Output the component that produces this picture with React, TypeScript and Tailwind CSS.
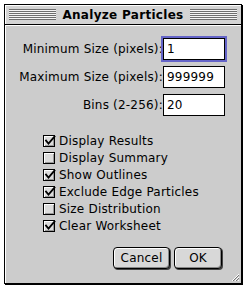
import type { ReactNode } from 'react';

const fields = [
  { label: 'Minimum Size (pixels):', value: '1', focused: true },
  { label: 'Maximum Size (pixels):', value: '999999', focused: false },
  { label: 'Bins (2-256):', value: '20', focused: false },
];

const options = [
  { label: 'Display Results', checked: true },
  { label: 'Display Summary', checked: false },
  { label: 'Show Outlines', checked: true },
  { label: 'Exclude Edge Particles', checked: true },
  { label: 'Size Distribution', checked: false },
  { label: 'Clear Worksheet', checked: true },
];

function Stripes({ className }: { className: string }) {
  return (
    <div
      className={`h-[11px] bg-[repeating-linear-gradient(to_bottom,#6e6e6e_0px,#6e6e6e_1px,#f4f4f4_1px,#f4f4f4_2px)] ${className}`}
    />
  );
}

function CheckBox({ checked }: { checked: boolean }) {
  return (
    <span className="relative block h-[12px] w-[12px] shrink-0 border border-black bg-[#dcdcdc] shadow-[inset_1px_1px_0_#fff,inset_-1px_-1px_0_#999]">
      {checked && (
        <svg className="absolute left-[0px] top-[-1px]" width="12" height="12" viewBox="0 0 12 12">
          <path d="M2 5.5 L4.5 8.5 L10.5 1.5" fill="none" stroke="#000" strokeWidth="1.8" strokeLinecap="square" />
        </svg>
      )}
    </span>
  );
}

function Button({ children, className }: { children: ReactNode; className: string }) {
  return (
    <button
      className={`flex h-[22px] items-center justify-center rounded-[4px] border border-black bg-[#d8d8d8] text-[12px] leading-none tracking-[0.2px] text-black shadow-[inset_1px_1px_0_#fff,inset_-1px_-1px_0_#888,1px_1px_0_#444] ${className}`}
    >
      {children}
    </button>
  );
}

export default function App() {
  return (
    <div className="h-[292px] w-[250px] bg-white pl-[4px] pt-[4px] font-['DejaVu_Sans',sans-serif] text-black">
      <div className="relative flex h-[280px] w-[238px] flex-col border border-black bg-[#cccccc] shadow-[1px_1px_0_#000]">
        <div className="flex h-[20px] shrink-0 items-center gap-[4px] border-b border-black bg-[#d4d4d4] px-[4px] shadow-[inset_1px_1px_0_#fff]">
          <Stripes className="flex-1" />
          <span className="px-[2px] text-[12px] font-bold leading-none tracking-[0.3px]">Analyze Particles</span>
          <Stripes className="flex-1" />
        </div>

        <div className="flex flex-1 flex-col shadow-[inset_1px_1px_0_#fff]">
          <div className="flex flex-col gap-[6px] pt-[13px]">
            {fields.map((f) => (
              <div key={f.label} className="flex items-center">
                <span className="w-[158px] text-right text-[12px] leading-none tracking-[0.2px]">{f.label}</span>
                <div
                  className={`flex h-[22px] w-[62px] items-center border border-black bg-white pl-[3px] text-[12px] leading-none tracking-[0.2px] ${
                    f.focused ? 'shadow-[0_0_0_2px_#6464c8]' : ''
                  }`}
                >
                  {f.value}
                </div>
              </div>
            ))}
          </div>

          <div className="mt-[16px] flex flex-col pl-[38px]">
            {options.map((o) => (
              <div key={o.label} className="flex h-[17px] items-center gap-[4px]">
                <CheckBox checked={o.checked} />
                <span className="text-[12px] leading-none tracking-[0.2px]">{o.label}</span>
              </div>
            ))}
          </div>

          <div className="mt-[13px] flex justify-end gap-[4px] pr-[19px]">
            <Button className="w-[57px]">Cancel</Button>
            <Button className="w-[48px]">OK</Button>
          </div>
        </div>

        <svg className="absolute bottom-[1px] right-[1px]" width="11" height="11" viewBox="0 0 11 11">
          <path d="M10 3 L3 10 M10 6 L6 10 M10 9 L9 10" stroke="#fff" strokeWidth="1" />
          <path d="M10 4 L4 10 M10 7 L7 10" stroke="#777" strokeWidth="1" />
        </svg>
      </div>
    </div>
  );
}
